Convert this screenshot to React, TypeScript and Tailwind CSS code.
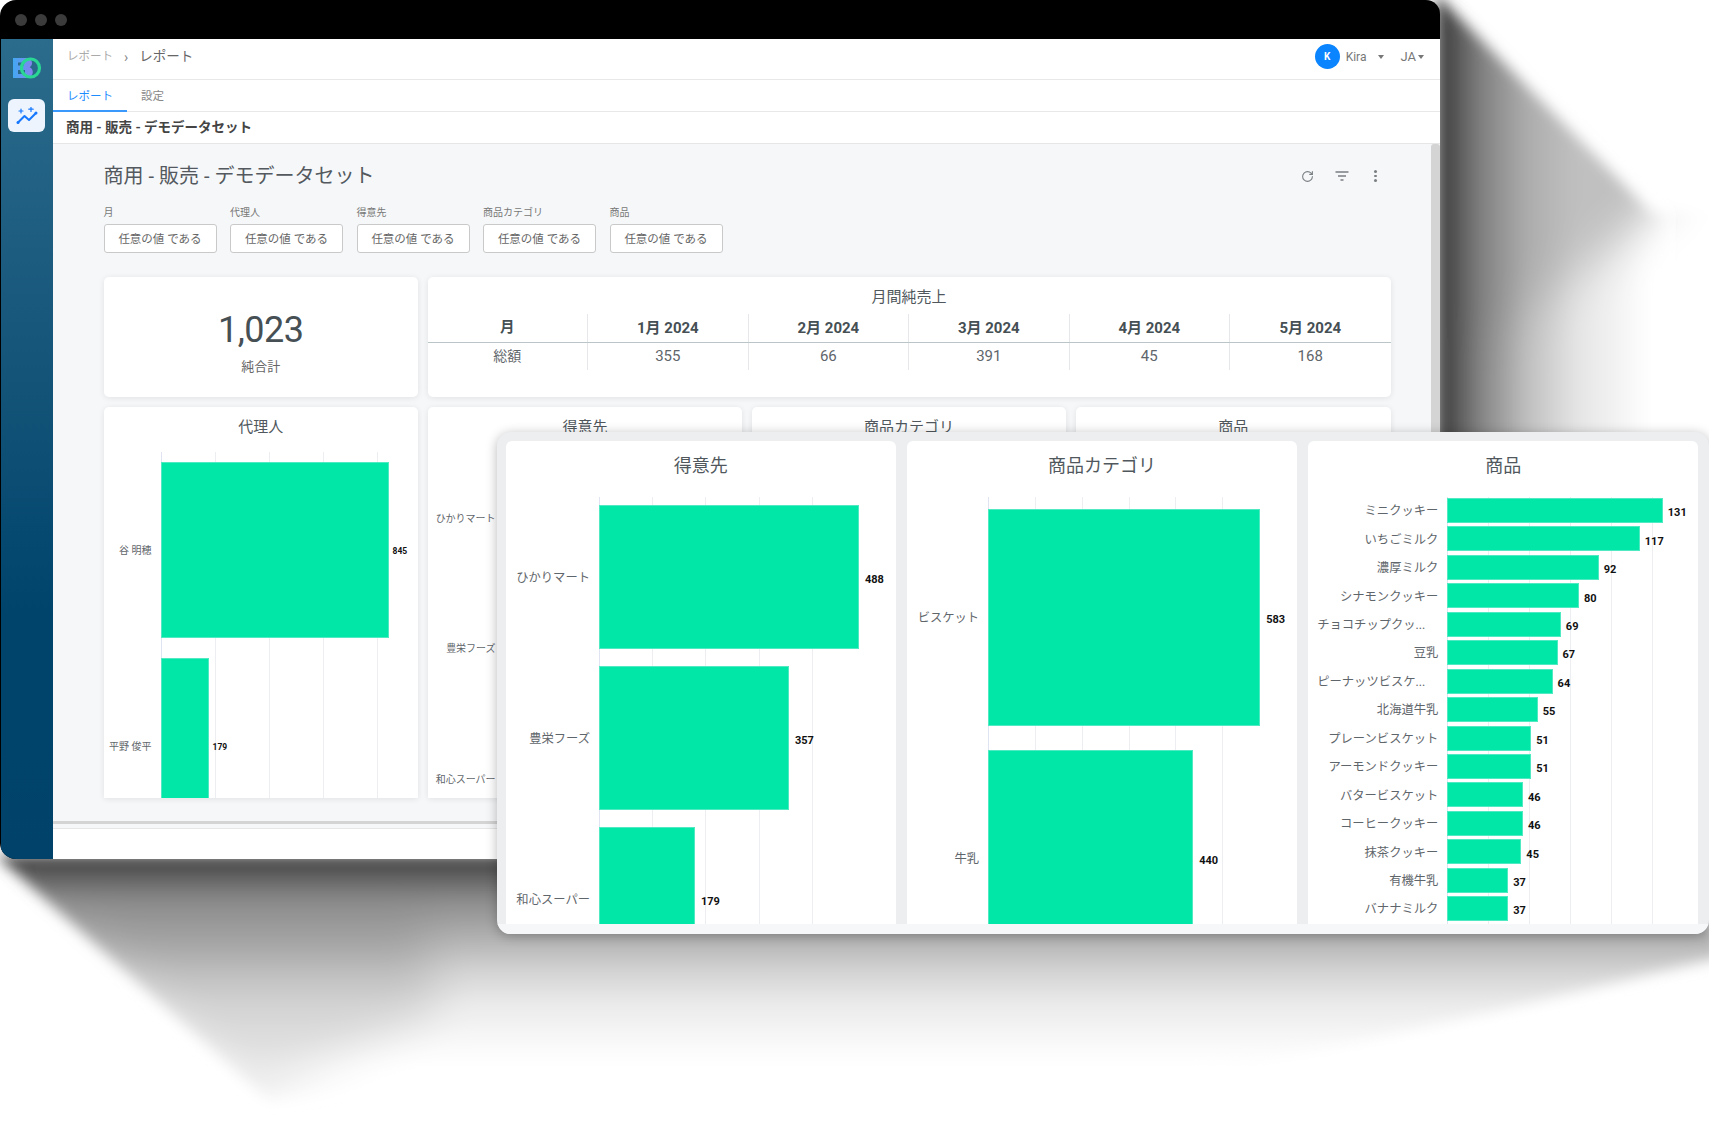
import { RotateCw } from "lucide-react";

const FILTERS = ["月", "代理人", "得意先", "商品カテゴリ", "商品"];
const MONTHS = [
  ["1月 2024", "355"],
  ["2月 2024", "66"],
  ["3月 2024", "391"],
  ["4月 2024", "45"],
  ["5月 2024", "168"],
];

type Row = { label: string; value: number; width: number };

const PRODUCTS: [string, number][] = [
  ["ミニクッキー", 131],
  ["いちごミルク", 117],
  ["濃厚ミルク", 92],
  ["シナモンクッキー", 80],
  ["チョコチップクッ...", 69],
  ["豆乳", 67],
  ["ピーナッツビスケ...", 64],
  ["北海道牛乳", 55],
  ["プレーンビスケット", 51],
  ["アーモンドクッキー", 51],
  ["バタービスケット", 46],
  ["コーヒークッキー", 46],
  ["抹茶クッキー", 45],
  ["有機牛乳", 37],
  ["バナナミルク", 37],
];

function BarChart({
  rows,
  axis,
  step,
  ticks,
  padTop,
  barHeight,
  gap,
  labelClass,
  valueClass,
}: {
  rows: Row[];
  axis: number;
  step: number;
  ticks: number;
  padTop: number;
  barHeight: number;
  gap: number;
  labelClass: string;
  valueClass: string;
}) {
  return (
    <div className="relative min-h-0 flex-1 overflow-hidden">
      <div className="absolute top-0 bottom-0 w-px bg-[#dfe3f2]" style={{ left: axis }} />
      {Array.from({ length: ticks }, (_, i) => (
        <div
          key={i}
          className="absolute top-0 bottom-0 w-px bg-[#eceef1]"
          style={{ left: axis + (i + 1) * step }}
        />
      ))}
      <div className="relative flex flex-col" style={{ paddingTop: padTop, gap }}>
        {rows.map((row) => (
          <div key={row.label} className="flex shrink-0 items-center" style={{ height: barHeight }}>
            <div className="flex shrink-0 justify-end" style={{ width: axis }}>
              <span
                className={`relative whitespace-nowrap text-[#5f666b] ${labelClass} ${
                  row.label.endsWith("...") ? "mr-[22px]" : "mr-[9px]"
                }`}
              >
                {row.label}
              </span>
            </div>
            <div
              className="h-full shrink-0 border border-[#4fe9c2] bg-[#00e7a7]"
              style={{ width: row.width }}
            />
            <span className={`relative font-bold text-[#111] ${valueClass}`}>{row.value}</span>
          </div>
        ))}
      </div>
    </div>
  );
}

function SmallCard({ title, children }: { title: string; children?: React.ReactNode }) {
  return (
    <div className="flex h-[391px] flex-col overflow-hidden rounded-t-[5px] bg-white shadow-[0_1px_6px_rgba(0,0,0,0.09)]">
      <div className="flex h-[45px] shrink-0 items-center justify-center pb-[5px] text-[15px] text-[#50585d]">
        {title}
      </div>
      {children}
    </div>
  );
}

function LargeCard({ title, children }: { title: string; children: React.ReactNode }) {
  return (
    <div className="flex min-h-0 flex-col overflow-hidden rounded-t-[6px] bg-white">
      <div className="flex h-[56px] shrink-0 items-center justify-center pb-[8px] text-[18px] text-[#50585d]">
        {title}
      </div>
      {children}
    </div>
  );
}

function Logo() {
  return (
    <svg width="30" height="24" viewBox="0 0 30 24" fill="none">
      <defs>
        <linearGradient id="logoB" x1="0" y1="0" x2="1" y2="0">
          <stop offset="0" stopColor="#42a9f2" />
          <stop offset="1" stopColor="#8583ee" />
        </linearGradient>
      </defs>
      <path
        fillRule="evenodd"
        d="M1 2h13c3.6 0 6 2.200 6 5 0 2-1 3.400-2.400 4.300 1.900.8 3.200 2.500 3.200 4.700 0 3.400-2.800 6-6.600 6H1V2zm5 4.500v3h6v-3H6zm0 7.500v4h7v-4H6z"
        fill="url(#logoB)"
      />
      <circle cx="18.500" cy="12" r="9" stroke="#2ad694" strokeWidth="3.200" />
    </svg>
  );
}

function InsightIcon() {
  return (
    <svg width="22" height="18" viewBox="0 0 22 18" fill="none" stroke="#1677ff">
      <path d="M2 15.500 8.500 9l4.500 4L20 6" strokeWidth="2" strokeLinecap="round" strokeLinejoin="round" />
      <circle cx="2" cy="15.500" r="1.500" fill="#1677ff" stroke="none" />
      <circle cx="20" cy="6" r="1.500" fill="#1677ff" stroke="none" />
      <path d="M5 2v4M3 4h4M15 0v4.500M12.800 2.200h4.400" strokeWidth="1.200" strokeLinecap="round" />
    </svg>
  );
}

function FilterIcon() {
  return (
    <svg width="14" height="10" viewBox="0 0 14 10" fill="none" stroke="#7a7f83" strokeWidth="1.300">
      <path d="M.5 1h13M3 5h8M5.500 9h3" />
    </svg>
  );
}

function Caret() {
  return <span className="h-0 w-0 border-x-[3.500px] border-t-[4px] border-x-transparent border-t-[#777]" />;
}

function Shadows() {
  return (
    <svg className="absolute top-0 left-0" width="1709" height="1128" viewBox="0 0 1709 1128" fill="none">
      <defs>
        <linearGradient id="sideLow" gradientUnits="userSpaceOnUse" x1="1440" y1="0" x2="1650" y2="0">
          <stop offset="0" stopColor="#3a3a3a" />
          <stop offset="0.2" stopColor="#868686" />
          <stop offset="0.42" stopColor="#c0c0c0" />
          <stop offset="0.65" stopColor="#e4e4e4" />
          <stop offset="1" stopColor="#fff" />
        </linearGradient>
        <linearGradient id="sideTip" gradientUnits="userSpaceOnUse" x1="1450" y1="0" x2="1640" y2="0">
          <stop offset="0" stopColor="#000" stopOpacity="0" />
          <stop offset="1" stopColor="#000" stopOpacity="0.24" />
        </linearGradient>
        <linearGradient id="lowFill" gradientUnits="userSpaceOnUse" x1="0" y1="859" x2="0" y2="1065">
          <stop offset="0" stopColor="#404040" />
          <stop offset="0.2" stopColor="#8c8c8c" />
          <stop offset="0.4" stopColor="#b4b4b4" />
          <stop offset="0.55" stopColor="#d4d4d4" />
          <stop offset="0.7" stopColor="#eaeaea" />
          <stop offset="0.88" stopColor="#f8f8f8" />
          <stop offset="1" stopColor="#fff" />
        </linearGradient>
        <clipPath id="sideClip">
          <path d="M1436 -6 1652 213 1730 213 1730 460 1436 460Z" />
        </clipPath>
        <clipPath id="lowClip">
          <path d="M-4 855 268 1100 1720 1100 1720 855Z" />
        </clipPath>
        <filter id="soft" x="-20%" y="-20%" width="140%" height="140%">
          <feGaussianBlur stdDeviation="7" />
        </filter>
        <filter id="softer" x="-40%" y="-40%" width="180%" height="180%">
          <feGaussianBlur stdDeviation="22" />
        </filter>
      </defs>
      <g filter="url(#soft)">
        <g clipPath="url(#sideClip)">
          <path d="M1430 -10H1660V460H1430Z" fill="url(#sideLow)" />
          <path d="M1440 -20 1690 170 1640 225 1490 340 1440 340Z" fill="url(#sideTip)" filter="url(#softer)" />
        </g>
      </g>
      <g filter="url(#soft)">
        <g clipPath="url(#lowClip)">
          <path d="M-20 850H1570L1730 935V955L1500 1010 1200 1075H400L250 1105Z" fill="url(#lowFill)" />
          <path d="M80 920 250 1100 440 1010 420 920Z" fill="#000" opacity="0.1" filter="url(#softer)" />
        </g>
      </g>
    </svg>
  );
}

export default function App() {
  const customers: Row[] = [
    { label: "ひかりマート", value: 488, width: 260 },
    { label: "豊栄フーズ", value: 357, width: 190 },
    { label: "和心スーパー", value: 179, width: 96 },
  ];
  const categories: Row[] = [
    { label: "ビスケット", value: 583, width: 272 },
    { label: "牛乳", value: 440, width: 205 },
  ];
  const products: Row[] = PRODUCTS.map(([label, value]) => ({ label, value, width: value * 1.645 }));

  return (
    <div className="relative h-[1128px] w-[1709px] overflow-hidden bg-white font-['Roboto','Noto_Sans_CJK_JP',sans-serif]">
      <Shadows />

      {/* main window */}
      <div className="relative flex h-[859px] w-[1440px] flex-col overflow-hidden rounded-[16px] rounded-tr-[14px] bg-black">
        <div className="flex h-[39px] shrink-0 items-center gap-[8px] pl-[15px]">
          <span className="h-[12px] w-[12px] rounded-full bg-[#3b3b3b]" />
          <span className="h-[12px] w-[12px] rounded-full bg-[#3b3b3b]" />
          <span className="h-[12px] w-[12px] rounded-full bg-[#3b3b3b]" />
        </div>
        <div className="flex min-h-0 flex-1">
          <aside className="ml-px flex w-[52px] shrink-0 flex-col items-center bg-gradient-to-b from-[#2b6b8b] via-[#00446c] via-[70%] to-[#00426a]">
            <div className="mt-[17px] mr-[1px]">
              <Logo />
            </div>
            <div className="mt-[19px] mr-[1px] flex h-[33px] w-[37px] items-center justify-center rounded-[6px] bg-[#edf4fe]">
              <InsightIcon />
            </div>
          </aside>

          <main className="flex min-w-0 flex-1 flex-col bg-white">
            <header className="flex h-[41px] shrink-0 items-center justify-between border-b border-[#e8e8e8] pr-[13px] pb-[5px] pl-[14px]">
              <div className="flex items-center text-[#777]">
                <span className="text-[11.500px] text-[#aaa]">レポート</span>
                <span className="mx-[11px] text-[14px] leading-none text-[#888]">›</span>
                <span className="text-[13.500px] text-[#666]">レポート</span>
              </div>
              <div className="mr-[3px] flex items-center text-[12px] text-[#777]">
                <span className="flex h-[25px] w-[25px] items-center justify-center rounded-full bg-[#0a84ff] text-[10px] font-bold text-white">
                  K
                </span>
                <span className="ml-[6px]">Kira</span>
                <span className="mr-[16px] ml-[12px] flex">
                  <Caret />
                </span>
                <span className="mr-[2px] text-[13px]">JA</span>
                <Caret />
              </div>
            </header>

            <nav className="flex h-[32px] shrink-0 border-b border-[#e8e8e8] text-[11.500px]">
              <div className="-mb-px flex w-[74px] items-center justify-center border-b-2 border-[#3b99fc] pt-[3px] text-[#1d8cff]">
                レポート
              </div>
              <div className="ml-[14px] flex items-center pt-[3px] text-[#888]">設定</div>
            </nav>

            <div className="flex h-[32px] shrink-0 items-center border-b border-[#e4e6e8] pl-[13px] text-[13.500px] font-bold text-[#444]">
              商用 - 販売 - デモデータセット
            </div>

            <section className="relative flex h-[677px] shrink-0 flex-col overflow-hidden bg-[#f6f7f9] pl-[50.500px]">
              <div className="mt-[20px] flex h-[24px] w-[1287px] shrink-0 items-center justify-between">
                <h1 className="text-[20px] font-normal text-[#53595e]">商用 - 販売 - デモデータセット</h1>
                <div className="mr-[14px] flex items-center text-[#7a7f83]">
                  <RotateCw size={13} />
                  <span className="ml-[21px] flex">
                    <FilterIcon />
                  </span>
                  <span className="ml-[25px] flex flex-col gap-[2px]">
                    <span className="h-[2.500px] w-[2.500px] rounded-full bg-[#7a7f83]" />
                    <span className="h-[2.500px] w-[2.500px] rounded-full bg-[#7a7f83]" />
                    <span className="h-[2.500px] w-[2.500px] rounded-full bg-[#7a7f83]" />
                  </span>
                </div>
              </div>

              <div className="mt-[18px] flex shrink-0 gap-[13.500px]">
                {FILTERS.map((name) => (
                  <div key={name} className="flex w-[113px] flex-col">
                    <label className="mb-[6px] h-[12px] text-[10px] leading-[14px] text-[#777]">{name}</label>
                    <button className="flex h-[29px] items-center justify-center rounded-[3px] border border-[#c9c9c9] bg-white pt-[3px] text-[11.500px] text-[#666]">
                      任意の値 である
                    </button>
                  </div>
                ))}
              </div>

              <div className="mt-[24px] grid w-[1287px] shrink-0 grid-cols-4 gap-x-[9.500px] gap-y-[10px]">
                <div className="flex h-[120px] flex-col items-center rounded-[5px] bg-white pt-[32px] shadow-[0_1px_6px_rgba(0,0,0,0.09)]">
                  <div className="text-[36px] leading-[42px] tracking-[-0.5px] text-[#454f54]">1,023</div>
                  <div className="mt-[6px] text-[13px] text-[#666]">純合計</div>
                </div>

                <div className="col-span-3 flex h-[120px] flex-col rounded-[5px] bg-white shadow-[0_1px_6px_rgba(0,0,0,0.09)]">
                  <div className="flex h-[37px] items-center justify-center pt-[3px] text-[15px] text-[#50585d]">
                    月間純売上
                  </div>
                  <div className="grid grid-cols-6 border-b border-[#b9c5c6]">
                    <div className="flex h-[28px] items-center justify-center border-r border-[#e5e7ea] text-[14.500px] font-bold text-[#454f54]">
                      月
                    </div>
                    {MONTHS.map(([month]) => (
                      <div
                        key={month}
                        className="flex h-[28px] items-center justify-center border-r border-[#e5e7ea] text-[15px] font-bold text-[#454f54] last:border-r-0"
                      >
                        {month}
                      </div>
                    ))}
                  </div>
                  <div className="grid grid-cols-6">
                    <div className="flex h-[27px] items-center justify-center border-r border-[#e5e7ea] text-[14px] text-[#5f666b]">
                      総額
                    </div>
                    {MONTHS.map(([month, total]) => (
                      <div
                        key={month}
                        className="flex h-[27px] items-center justify-center border-r border-[#e5e7ea] text-[15px] text-[#5f666b] last:border-r-0"
                      >
                        {total}
                      </div>
                    ))}
                  </div>
                </div>

                <SmallCard title="代理人">
                  <BarChart
                    rows={[
                      { label: "谷 明穂", value: 845, width: 228 },
                      { label: "平野 俊平", value: 179, width: 48 },
                    ]}
                    axis={57}
                    step={54}
                    ticks={4}
                    padTop={10}
                    barHeight={176}
                    gap={20}
                    labelClass="-mr-px text-[10px]"
                    valueClass="top-[1px] ml-[4px] text-[8.500px]"
                  />
                </SmallCard>
                <SmallCard title="得意先">
                  <BarChart
                    rows={[
                      { label: "ひかりマート", value: 488, width: 160 },
                      { label: "豊栄フーズ", value: 357, width: 120 },
                      { label: "和心スーパー", value: 179, width: 60 },
                    ]}
                    axis={77}
                    step={45}
                    ticks={4}
                    padTop={8}
                    barHeight={116}
                    gap={14.500}
                    labelClass="text-[10px]"
                    valueClass="ml-[4px] text-[8.500px]"
                  />
                </SmallCard>
                <SmallCard title="商品カテゴリ" />
                <SmallCard title="商品" />
              </div>
            </section>

            <div className="h-[3px] shrink-0 bg-[#d4d4d4]" />
            <div className="h-[5px] shrink-0 border-b border-[#e6e6e6] bg-[#f6f7f9]" />
            <div className="flex-1 bg-white" />
          </main>
        </div>

        <div className="absolute top-[144px] right-0 h-[677px] w-[9px] rounded-t-[3px] bg-[#d4d4d4]" />
      </div>

      {/* enlarged panel laid over the window */}
      <div className="absolute top-[432px] left-[497px] flex h-[502px] w-[1212px] flex-col overflow-hidden rounded-[14px] bg-[#eceef0] shadow-[0_2px_12px_rgba(0,0,0,0.28)]">
        <div className="grid min-h-0 flex-1 grid-cols-3 gap-x-[11.500px] pt-[9px] pr-[11px] pl-[9px]">
          <LargeCard title="得意先">
            <BarChart
              rows={customers}
              axis={93}
              step={53.200}
              ticks={4}
              padTop={8}
              barHeight={144}
              gap={17}
              labelClass="top-[1px] text-[12.300px]"
              valueClass="top-[3px] ml-[6px] text-[11px]"
            />
          </LargeCard>
          <LargeCard title="商品カテゴリ">
            <BarChart
              rows={categories}
              axis={81}
              step={46.800}
              ticks={5}
              padTop={12}
              barHeight={217}
              gap={24}
              labelClass="top-[1px] text-[12.300px]"
              valueClass="top-[3px] ml-[6px] text-[11px]"
            />
          </LargeCard>
          <LargeCard title="商品">
            <BarChart
              rows={products}
              axis={139}
              step={41}
              ticks={5}
              padTop={1}
              barHeight={25}
              gap={3.450}
              labelClass="top-[1px] text-[12.300px]"
              valueClass="top-[3px] ml-[5px] text-[11px]"
            />
          </LargeCard>
        </div>
        <div className="h-[10px] shrink-0 bg-[#f6f7f9]" />
      </div>
    </div>
  );
}
